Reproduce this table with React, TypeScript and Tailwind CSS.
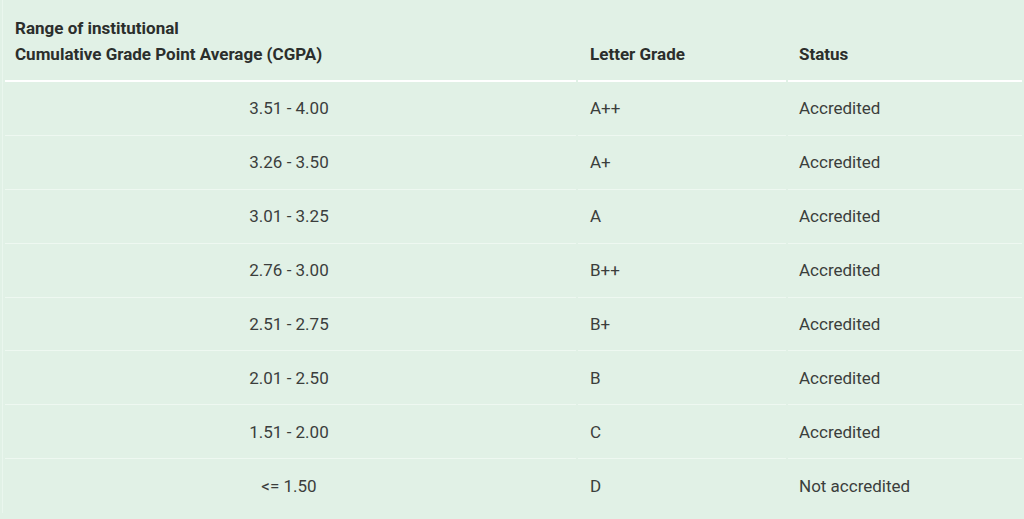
const rows = [
  { range: "3.51 - 4.00", grade: "A++", status: "Accredited" },
  { range: "3.26 - 3.50", grade: "A+", status: "Accredited" },
  { range: "3.01 - 3.25", grade: "A", status: "Accredited" },
  { range: "2.76 - 3.00", grade: "B++", status: "Accredited" },
  { range: "2.51 - 2.75", grade: "B+", status: "Accredited" },
  { range: "2.01 - 2.50", grade: "B", status: "Accredited" },
  { range: "1.51 - 2.00", grade: "C", status: "Accredited" },
  { range: "<= 1.50", grade: "D", status: "Not accredited" },
];

export default function App() {
  return (
    <div className="w-[1024px] h-[519px] bg-[#e1f1e6] overflow-hidden font-['Roboto',sans-serif]">
      <table className="w-[1022px] ml-[2px] border-separate border-spacing-x-[2px] border-spacing-y-0 border-l border-[#eaf6ee]">
        <thead>
          <tr className="h-[82px] text-[17px] font-bold text-[#2b2e2c] leading-[26px]">
            <th className="w-[571px] text-left align-bottom pl-[10px] pb-[13px] border-b-2 border-white font-bold">
              Range of institutional
              <br />
              Cumulative Grade Point Average (CGPA)
            </th>
            <th className="w-[208px] text-left align-bottom pl-[12px] pb-[13px] border-b-2 border-white font-bold">
              Letter Grade
            </th>
            <th className="text-left align-bottom pl-[11px] pb-[13px] border-b-2 border-white font-bold">
              Status
            </th>
          </tr>
        </thead>
        <tbody className="text-[17px] text-[#3b3e3c]">
          {rows.map((r, i) => (
            <tr key={r.range} className="h-[53.9px]">
              <td className={"text-center pr-[3px] pt-[1px] " + (i < rows.length - 1 ? "border-b border-[#eef8f1]" : "")}>
                {r.range}
              </td>
              <td className={"pl-[12px] pt-[1px] " + (i < rows.length - 1 ? "border-b border-[#eef8f1]" : "")}>
                {r.grade}
              </td>
              <td className={"pl-[11px] pt-[1px] " + (i < rows.length - 1 ? "border-b border-[#eef8f1]" : "")}>
                {r.status}
              </td>
            </tr>
          ))}
        </tbody>
      </table>
    </div>
  );
}
